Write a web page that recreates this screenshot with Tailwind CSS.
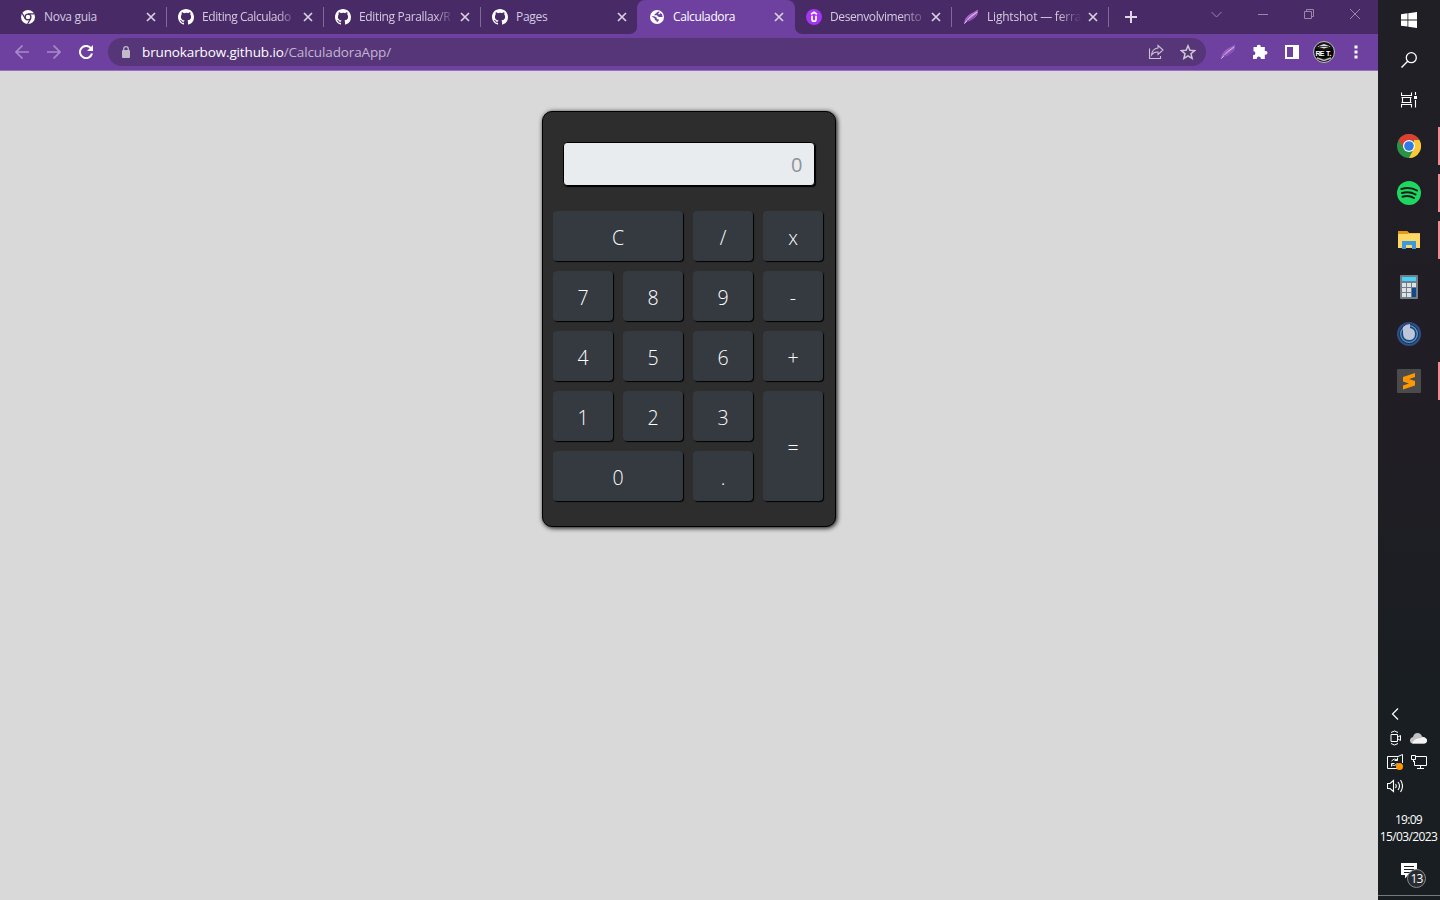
<!DOCTYPE html>
<html lang="pt-BR">
<head>
<meta charset="utf-8">
<title>Calculadora</title>
<script src="https://cdn.jsdelivr.net/npm/@tailwindcss/browser@4"></script>
</head>
<body class="flex h-[900px] w-[1440px] overflow-hidden bg-[#d9d9d9] font-['Open_Sans','Noto_Sans',sans-serif]">
<svg class="hidden">
  <symbol id="gh" viewBox="0 0 16 16"><path fill="#fff" d="M8 0C3.58 0 0 3.58 0 8c0 3.54 2.29 6.53 5.47 7.59.4.07.55-.17.55-.38 0-.19-.01-.82-.01-1.49-2.01.37-2.53-.49-2.69-.94-.09-.23-.48-.94-.82-1.13-.28-.15-.68-.52-.01-.53.63-.01 1.08.58 1.23.82.72 1.21 1.87.87 2.33.66.07-.52.28-.87.51-1.07-1.78-.2-3.64-.89-3.64-3.95 0-.87.31-1.59.82-2.15-.08-.2-.36-1.02.08-2.12 0 0 .67-.21 2.2.82A7.6 7.6 0 0 1 8 3.86c.68 0 1.36.09 2 .27 1.53-1.04 2.2-.82 2.2-.82.44 1.1.16 1.92.08 2.12.51.56.82 1.27.82 2.15 0 3.07-1.87 3.75-3.65 3.95.29.25.54.73.54 1.48 0 1.07-.01 1.93-.01 2.2 0 .21.15.46.55.38A8 8 0 0 0 16 8c0-4.42-3.58-8-8-8z"/></symbol>
  <symbol id="x" viewBox="0 0 10 10"><path d="M1 1l8 8M9 1L1 9" stroke="#d9d1e1" stroke-width="1.7"/></symbol>
  <symbol id="feather" viewBox="0 0 16 16"><path fill="#a865c9" d="M1 15.500Q1 9 7 5Q11 3 15 0.500Q16 6 10 10Q7 12.500 3.500 12.500Z"/><path d="M1.500 14.500Q7 7 14 3" stroke="#e7cfee" fill="none"/><path d="M4 12Q10 10 13 6" stroke="#70409b" fill="none" stroke-width=".8"/></symbol>
</svg>

<div class="flex w-[1378px] flex-col">
  <!-- Tab strip -->
  <div class="flex h-[34px] bg-[#472a66] pl-[9px] text-[12px] tracking-[-0.3px] text-[#d5cbe0]">
    <div class="flex w-[158px] items-center pl-3">
      <svg class="h-[14px] w-[14px] shrink-0" viewBox="0 0 14 14"><circle cx="7" cy="7" r="7" fill="#fff"/><circle cx="7" cy="7" r="2.900" fill="none" stroke="#472a66" stroke-width="1.300"/><path d="M7 3.800H13.300M4.300 8.700L1.200 3.400M9.700 8.700L6.600 13.800" stroke="#472a66" stroke-width="1.200"/></svg>
      <span class="ml-[9px] w-[92px] whitespace-nowrap">Nova guia</span>
      <svg class="ml-[10px] h-[10px] w-[10px]"><use href="#x"/></svg>
      <i class="ml-auto h-5 w-px bg-[#806a96]"></i>
    </div>
    <div class="flex w-[157px] items-center pl-[11px]">
      <svg class="h-4 w-4 shrink-0"><use href="#gh"/></svg>
      <span class="ml-2 w-[95px] whitespace-nowrap tracking-[-0.42px] mask-r-from-80% mask-r-to-100%">Editing Calculado</span>
      <svg class="ml-[6px] h-[10px] w-[10px] shrink-0"><use href="#x"/></svg>
      <i class="ml-auto h-5 w-px bg-[#806a96]"></i>
    </div>
    <div class="flex w-[157px] items-center pl-[11px]">
      <svg class="h-4 w-4 shrink-0"><use href="#gh"/></svg>
      <span class="ml-2 w-[95px] whitespace-nowrap tracking-[-0.35px] mask-r-from-80% mask-r-to-100%">Editing Parallax/R</span>
      <svg class="ml-[6px] h-[10px] w-[10px] shrink-0"><use href="#x"/></svg>
      <i class="ml-auto h-5 w-px bg-[#806a96]"></i>
    </div>
    <div class="flex w-[156px] items-center pl-[11px]">
      <svg class="h-4 w-4 shrink-0"><use href="#gh"/></svg>
      <span class="ml-2 w-[92px] whitespace-nowrap">Pages</span>
      <svg class="ml-[9px] h-[10px] w-[10px] shrink-0"><use href="#x"/></svg>
    </div>
    <div class="relative flex w-[158px] items-center rounded-t-[8px] bg-[#6e41a1] pl-[13px] text-white">
      <svg class="absolute bottom-0 -left-2 h-2 w-2"><path d="M8 0V8H0Q8 8 8 0Z" fill="#6e41a1"/></svg>
      <svg class="absolute -right-2 bottom-0 h-2 w-2"><path d="M0 0V8H8Q0 8 0 0Z" fill="#6e41a1"/></svg>
      <svg class="h-[14px] w-[14px] shrink-0" viewBox="0 0 14 14"><circle cx="7" cy="7" r="7" fill="#fff"/><path d="M8.500 1.600Q6.500 2 6.300 3.300Q4.300 3.600 4.300 5.300H7Q7.600 7 9.300 7H12.600Q12.600 4.500 10.800 3L9.500 4.300H8.300V3.300L9.800 2ZM1.400 6.200H4.300L6.800 7.800V9.300H8.700V10.700L6.700 12.600V10.800L4.800 9.900V8.500Z" fill="#6e41a1"/></svg>
      <span class="ml-[9px] w-[92px] whitespace-nowrap tracking-[-0.38px]">Calculadora</span>
      <svg class="ml-[9px] h-[10px] w-[10px] shrink-0"><use href="#x"/></svg>
    </div>
    <div class="flex w-[157px] items-center pl-[11px]">
      <svg class="h-4 w-4 shrink-0" viewBox="0 0 16 16"><circle cx="8" cy="8" r="8" fill="#a435f0"/><path d="M5 5.200L8 3.200L11 5.200M6 6.800V10.500Q6 12.200 8 12.200T10 10.500V6.800" fill="none" stroke="#fff" stroke-width="1.700"/></svg>
      <span class="ml-2 w-[95px] whitespace-nowrap tracking-[-0.4px] mask-r-from-75% mask-r-to-105%">Desenvolvimento</span>
      <svg class="ml-[6px] h-[10px] w-[10px] shrink-0"><use href="#x"/></svg>
      <i class="ml-auto h-5 w-px bg-[#806a96]"></i>
    </div>
    <div class="flex w-[157px] items-center pl-[11px]">
      <svg class="h-4 w-4 shrink-0"><use href="#feather"/></svg>
      <span class="ml-2 w-[95px] whitespace-nowrap tracking-[-0.2px] mask-r-from-75% mask-r-to-100%">Lightshot — ferra</span>
      <svg class="ml-[6px] h-[10px] w-[10px] shrink-0"><use href="#x"/></svg>
      <i class="ml-auto h-5 w-px bg-[#806a96]"></i>
    </div>
    <svg class="mt-[11px] ml-4 h-3 w-3" viewBox="0 0 12 12"><path d="M6 0V12M0 6H12" stroke="#e0d8e7" stroke-width="2"/></svg>
    <div class="mr-[18px] ml-auto flex h-7 items-center gap-9 text-[#9887a8]">
      <svg class="h-[11px] w-[11px]" viewBox="0 0 11 11"><path d="M.5 3L5.500 8L10.500 3" fill="none" stroke="currentColor"/></svg>
      <svg class="h-[10px] w-[10px]" viewBox="0 0 10 10"><path d="M0 5.500H10" stroke="currentColor"/></svg>
      <svg class="h-[10px] w-[10px]" viewBox="0 0 10 10"><path d="M.5 2.500H7.500V9.500H.5ZM2.500 2V.5H9.500V7.500H8" fill="none" stroke="currentColor"/></svg>
      <svg class="h-[10px] w-[10px]" viewBox="0 0 10 10"><path d="M0 0L10 10M10 0L0 10" stroke="currentColor"/></svg>
    </div>
  </div>

  <!-- Toolbar -->
  <div class="flex h-[37px] items-center border-b border-[#9670bb] bg-[#6e41a1] pl-[15px]">
    <svg class="h-[14px] w-[14px]" viewBox="0 0 14 14"><path d="M14 7H1M7.500 .5L1 7L7.500 13.500" fill="none" stroke="#a88ac8" stroke-width="1.700"/></svg>
    <svg class="ml-[18px] h-[14px] w-[14px]" viewBox="0 0 14 14"><path d="M0 7H13M6.500 .5L13 7L6.500 13.500" fill="none" stroke="#a88ac8" stroke-width="1.700"/></svg>
    <svg class="ml-[18px] h-[14px] w-[14px]" viewBox="0 0 14 14"><path d="M12 3.400A6.100 6.100 0 1 0 13 8.500" fill="none" stroke="#fff" stroke-width="2"/><path d="M14 0V6H8Z" fill="#fff"/></svg>
    <div class="ml-[15px] flex h-7 w-[1098px] items-center rounded-full bg-[#563679] pl-[14px]">
      <svg class="h-3 w-2" viewBox="0 0 8 12"><rect y="4" width="8" height="8" rx="1" fill="#c2bac8"/><path d="M1.700 5V3Q1.700 .7 4 .7T6.300 3V5" fill="none" stroke="#c2bac8" stroke-width="1.300"/></svg>
      <span class="ml-3 text-[13.500px] tracking-[-0.13px] text-[#c2b5d0]"><span class="text-white">brunokarbow.github.io</span>/CalculadoraApp/</span>
      <svg class="ml-auto h-4 w-4" viewBox="0 0 16 16"><path d="M1.500 4.500V14.500H12.500V12M10 1.500L15 6L10 10.500V8Q6 7.500 3.500 11Q4 5 10 4Z" fill="none" stroke="#cbc2cf" stroke-width="1.100"/></svg>
      <svg class="mr-[10px] ml-4 h-4 w-4" viewBox="0 0 16 16"><path d="M8 1.800L9.900 6.200L14.600 6.600L11 9.700L12.100 14.300L8 11.800L3.900 14.300L5 9.700L1.400 6.600L6.100 6.200Z" fill="none" stroke="#d0c8d3" stroke-width="1.500"/></svg>
    </div>
    <svg class="ml-[14px] h-4 w-4 opacity-85"><use href="#feather"/></svg>
    <svg class="ml-4 h-4 w-4" viewBox="0 0 16 16"><path fill="#fff" d="M1.500 3H5Q4.500 .8 6.800 .8T8.800 3H12.800V7Q15.500 6.500 15.500 8.800T12.800 10.800V15H9Q9 12.400 6.800 12.400T4.800 15H1V11.200Q3.400 11 3.400 9.200T1.500 7.200Z"/></svg>
    <svg class="ml-[17px] h-[14px] w-[14px]" viewBox="0 0 14 14"><path d="M0 0H14V14H0ZM2 2V12H8V2Z" fill="#fff" fill-rule="evenodd"/></svg>
    <svg class="ml-[14px] h-[22px] w-[22px]" viewBox="0 0 22 22"><circle cx="11" cy="11" r="10.500" fill="#171717" stroke="#bdbdbd"/><path d="M4.500 5.500L11 3L17.500 5.500L11 7.500Z" fill="#ddd"/><path d="M6 5.500H16" stroke="#444"/><path d="M2 7.500L11 9.500L20 7.500V15L11 17L2 15Z" fill="#050505"/><text x="2.500" y="14.500" fill="#fff" font-size="7" font-weight="700" font-family="Liberation Sans" textLength="9">RE</text><text x="13" y="14.500" fill="#fff" font-size="7" font-weight="700" font-family="Liberation Sans">T.</text><path d="M4 17L11 19.500L18 17" stroke="#bbb" stroke-width="1.500" fill="none"/></svg>
    <svg class="ml-[19px] h-[14px] w-[4px]" viewBox="0 0 4 14"><path d="M.5 .5h3v3h-3zM.5 5.500h3v3h-3zM.5 10.500h3v3h-3z" fill="#fff"/></svg>
  </div>

  <!-- Calculator page -->
  <main class="flex flex-1 items-start justify-center pt-10">
    <div class="h-[416px] w-[294px] rounded-[10px] border border-black bg-[#2d2d2d] px-[10px] pt-[30px] shadow-[1px_1px_5px_#000]">
      <div class="ml-[10px] flex h-[44px] w-[252px] items-center justify-end rounded-[4px] border border-black bg-[#e9ecef] pt-px pr-[12px] text-[20px] tracking-[-0.5px] text-[#8c939a] shadow-[1px_1px_1px_#000]">0</div>
      <div class="mt-[25px] grid grid-cols-[repeat(4,60px)] grid-rows-[repeat(5,50px)] gap-[10px] text-[19.500px] font-[360] text-white *:flex *:items-center *:justify-center *:rounded-[4px] *:bg-[#343a40] *:pt-[3px] *:shadow-[1px_1px_1px_#000]">
        <button class="col-span-2">C</button><button>/</button><button>x</button>
        <button>7</button><button>8</button><button>9</button><button>-</button>
        <button>4</button><button>5</button><button>6</button><button>+</button>
        <button>1</button><button>2</button><button>3</button><button class="row-span-2">=</button>
        <button class="col-span-2">0</button><button>.</button>
      </div>
    </div>
  </main>
</div>

<!-- Windows taskbar -->
<aside class="flex w-[62px] flex-col bg-linear-to-b from-[#201f25] via-[#201e24] via-50% to-[#181e21] to-80%">
  <div class="flex h-10 items-center justify-center"><svg class="h-4 w-4" viewBox="0 0 16 16"><path fill="#fff" d="M0 2.200L6.500 1.300V7.500H0ZM7.300 1.200L16 0V7.500H7.300ZM0 8.400H6.500V14.600L0 13.700ZM7.300 8.400H16V16L7.300 14.800Z"/></svg></div>
  <div class="flex h-10 items-center justify-center"><svg class="h-4 w-4" viewBox="0 0 16 16"><circle cx="10.300" cy="5.700" r="5" fill="none" stroke="#fff" stroke-width="1.300"/><path d="M6.700 9.300L.5 15.500" stroke="#fff" stroke-width="1.400"/></svg></div>
  <div class="flex h-10 items-center justify-center"><svg class="h-4 w-4" viewBox="0 0 16 16"><path d="M.5 .5V3.500H10.500V.5M.5 15.500V12.500H10.500V15.500M1.500 5.500H9.500V10.500H1.500ZM.5 5.500H10.500M.5 10.500H10.500M14.500 0V3M14.500 8V15.500" fill="none" stroke="#fff" stroke-width="1.100"/><path fill="#fff" d="M13 4h3v3h-3z"/></svg></div>
  <div class="mt-[2px] flex h-[47px] items-center pl-[19px]"><svg class="h-6 w-6" viewBox="0 0 24 24"><circle cx="12" cy="12" r="12" fill="#299447"/><path d="M1.600 6A12 12 0 0 1 22.400 6L12 7L7 14.500Z" fill="#df3f32"/><path d="M22.400 6A12 12 0 0 1 12 24L17 14.500V6Z" fill="#fdc735"/><circle cx="12" cy="12" r="6" fill="#fff"/><circle cx="12" cy="12" r="4.800" fill="#2c7be8"/></svg><i class="ml-auto h-[38px] w-[2px] bg-[#f48b92]"></i></div>
  <div class="flex h-[47px] items-center pl-[19px]"><svg class="h-6 w-6" viewBox="0 0 24 24"><circle cx="12" cy="12" r="12" fill="#1ed760"/><path d="M4.300 8Q13 5.500 20 9.500M5 12Q12.500 10 18.500 13.500M5.500 15.700Q12 14 17 17" fill="none" stroke="#171c1a" stroke-width="2" stroke-linecap="round"/></svg><i class="ml-auto h-[38px] w-[2px] bg-[#f48b92]"></i></div>
  <div class="flex h-[47px] items-center pl-[20px]"><svg class="h-[20px] w-[22px]" viewBox="0 0 22 20"><path d="M0 2Q0 1 1 1H9L11 3H22V18H0Z" fill="#f5bd3c"/><path d="M0 1H9L11 3L9 4H0Z" fill="#e09a15"/><path d="M0 4H22V18H0Z" fill="#ffd766"/><path d="M4 19V11H18V19H14V15H8V19Z" fill="#3b99df"/></svg><i class="ml-auto h-[38px] w-[2px] bg-[#f48b92]"></i></div>
  <div class="flex h-[47px] items-center justify-center"><svg class="h-6 w-[18px]" viewBox="0 0 18 24"><rect width="18" height="24" rx="1" fill="#747e88"/><path d="M2 2h14v4H2z" fill="#45d3f7"/><path d="M2 8h4v4H2zM7 8h4v4H7zM12 8h4v4h-4zM2 13h4v4H2zM7 13h4v4H7zM2 18h4v4H2zM7 18h4v4H7z" fill="#dce2e6"/><path d="M12 13h4v9h-4z" fill="#10498d"/></svg></div>
  <div class="flex h-[47px] items-center justify-center"><svg class="h-6 w-6" viewBox="0 0 24 24"><circle cx="12" cy="12" r="12" fill="#344c88"/><circle cx="12" cy="12" r="9.500" fill="#254173" stroke="#173258"/><circle cx="12" cy="12" r="8.300" fill="none" stroke="#48a8ca" stroke-width="1.200"/><path d="M6 5Q9 2 13 2V6Q18 7 18 12Q18 18 12 18Q6 18 6 11Z" fill="#bec6dc"/></svg></div>
  <div class="flex h-[47px] items-center pl-[19px]"><svg class="h-6 w-6" viewBox="0 0 24 24"><rect width="24" height="24" rx="1" fill="#4b4b4b"/><path d="M6 8L18 4V8L12 10L18 12V16.500L6 20.500V16.500L12 14.500L6 12.500Z" fill="#ff9800"/></svg><i class="ml-auto h-[38px] w-[2px] bg-[#f48b92]"></i></div>

  <div class="mt-auto grid grid-cols-[24px_24px] grid-rows-[repeat(4,24px)] place-items-center pl-[5px]">
    <svg class="mr-px h-3 w-2" viewBox="0 0 8 12"><path d="M7 .5L1.500 6L7 11.500" fill="none" stroke="#fff" stroke-width="1.200"/></svg><span></span>
    <svg class="h-4 w-[14px]" viewBox="0 0 14 16"><path d="M3 4.500H9.500V11.500H3ZM10 7L12.500 5.500V10.500L10 9M3 2.500Q6.500 -.5 10 2.500M3 13.500Q6.500 16.500 10 13.500" fill="none" stroke="#fff"/></svg>
    <svg class="mr-px h-[11px] w-[17px]" viewBox="0 0 17 11"><path d="M3 10.500Q0 10.500 0 7.500T3 4Q4 0 7.500 0T12 3.500Q17 5 17 7.500T14 10.500Z" fill="#c2c2c2"/><path d="M2 10.500Q4 6 8 5.500T13 4Q17 5 17 7.500T14 10.500Z" fill="#f4f4f4"/></svg>
    <svg class="h-4 w-4" viewBox="0 0 16 16"><path d="M11 14.500H.5V2.500H11L15.500 .5V9" fill="none" stroke="#fff"/><path d="M4.500 7Q7 3.500 10.500 6M10.500 3.500V6.500H7.500M10.500 9Q8 13 4.500 10.500M4.500 12.500V9.500H7.500" fill="none" stroke="#fff"/><circle cx="12.500" cy="12.500" r="3.500" fill="#ff9800"/></svg>
    <svg class="h-[14px] w-4" viewBox="0 0 16 14"><path d="M5 1.500H15.500V10.500H3.500V6M9.500 10.500V13.500M6 13.500H13M.5 .5H4.500V4.500H.5ZM2.500 4.500V7" fill="none" stroke="#fff"/></svg>
    <svg class="h-[14px] w-4" viewBox="0 0 16 14"><path d="M.5 4.500H3L6.500 1.500V12.500L3 9.500H.5ZM8.500 5Q10 7 8.500 9M11 3Q14 7 11 11M13.500 1Q17.500 7 13.500 13" fill="none" stroke="#fff" stroke-width="1.100"/></svg>
  </div>
  <div class="mt-[13px] text-center text-[12px] leading-[17px] whitespace-nowrap text-white"><div class="-ml-px tracking-[-0.700px]">19:09</div><div class="-ml-px tracking-[-0.600px]">15/03/2023</div></div>
  <div class="relative mt-[18px] flex h-8 w-full pl-[23px]">
    <svg class="h-4 w-4" viewBox="0 0 16 16"><path d="M0 0H16V12H7L4 15.500V12H0Z" fill="#fff"/><path d="M3 3.500H13M3 6.500H13M3 9.500H10" stroke="#1a1e21"/></svg>
    <span class="absolute top-[6px] left-[29px] flex h-[19px] w-[19px] items-center justify-center rounded-full border border-[#888b8d] bg-[#292d31] text-[12px] tracking-[-0.8px] text-white">13</span>
  </div>
  <div class="mb-1 h-px bg-[#74797b]"></div>
</aside>
</body>
</html>
